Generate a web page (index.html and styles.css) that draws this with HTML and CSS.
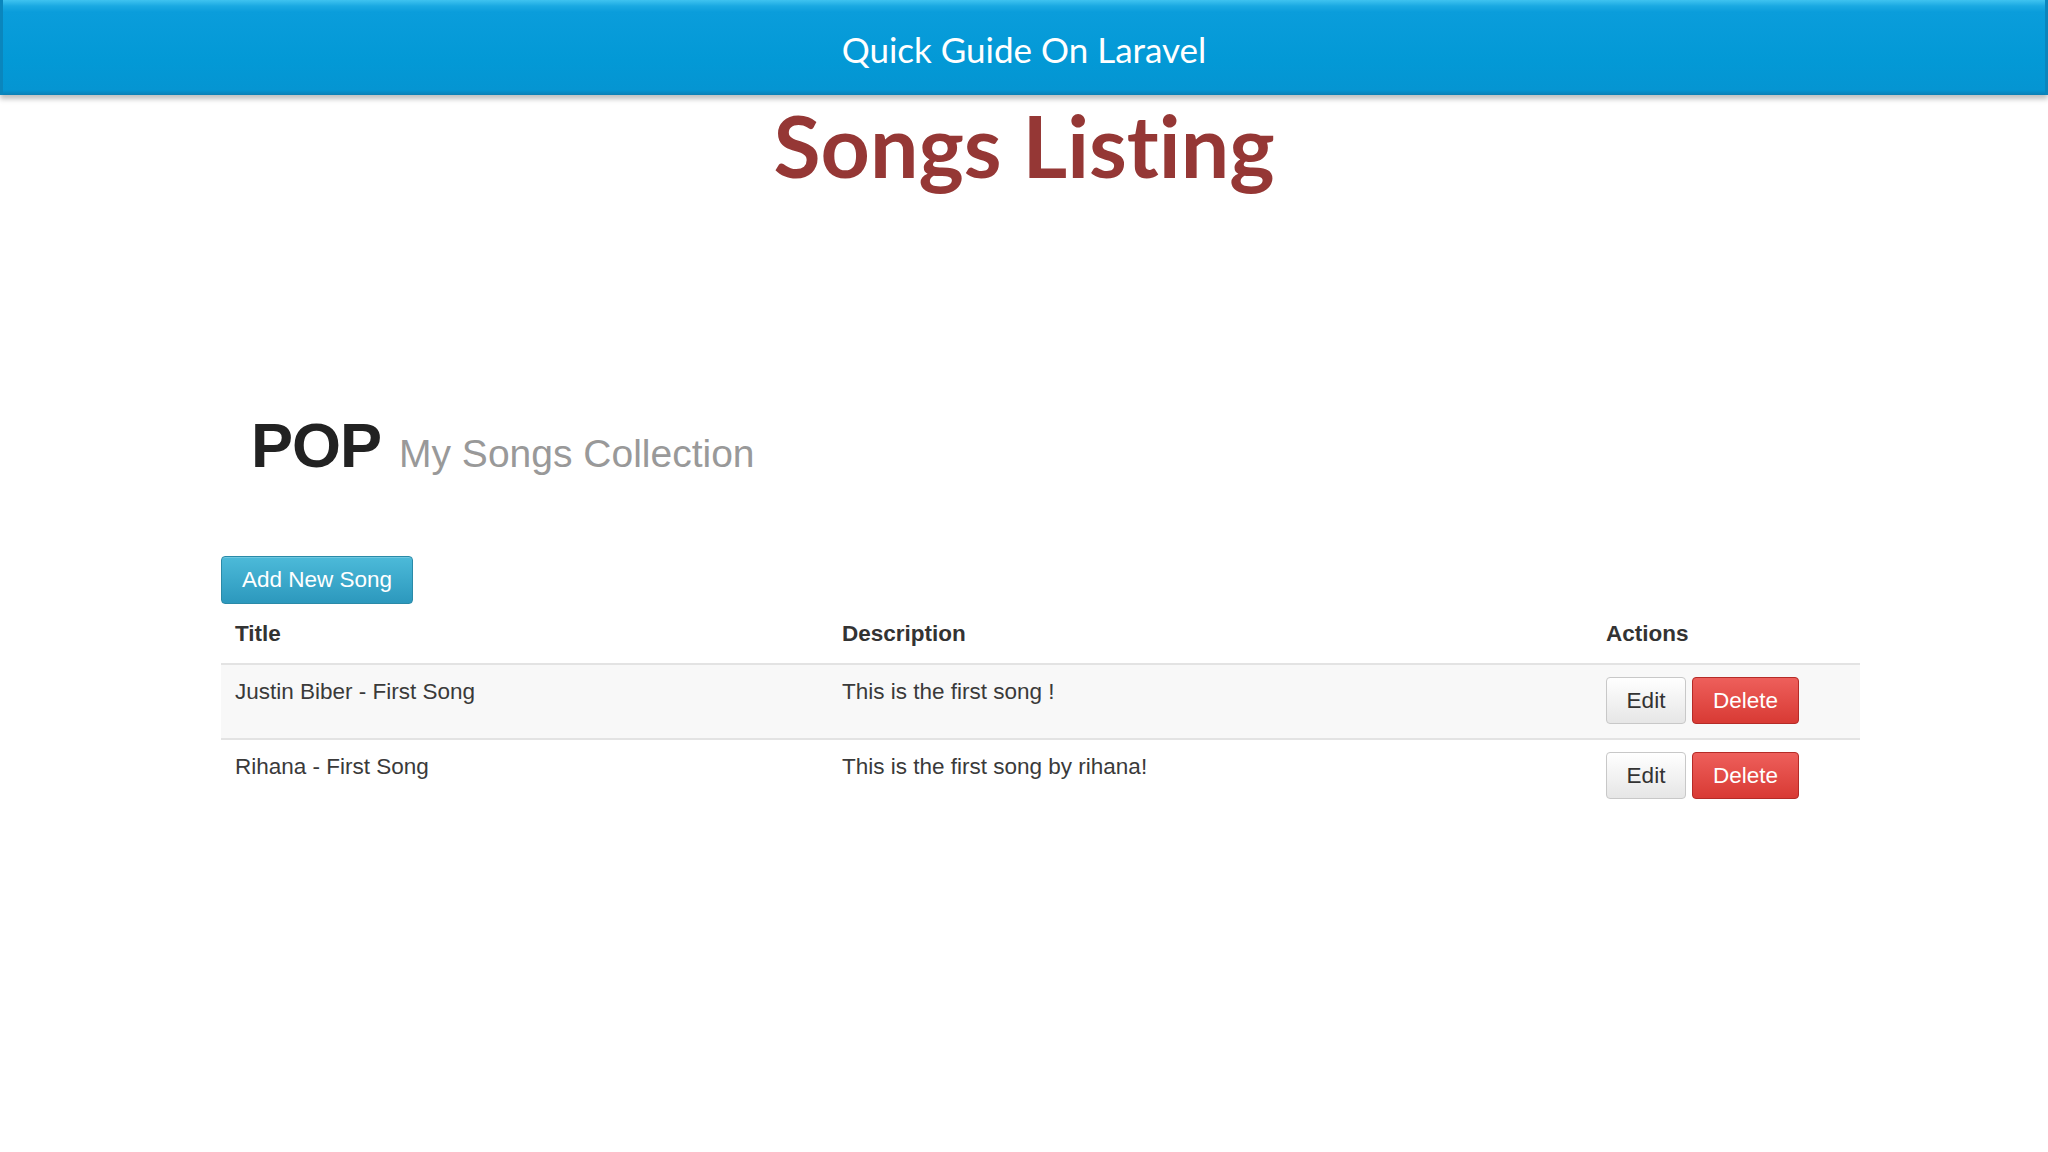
FILE: index.html
```html
<!DOCTYPE html>
<html>
<head>
<meta charset="utf-8">
<link rel="stylesheet" href="styles.css">
</head>
<body>
<header class="banner">
  <div class="banner-title">Quick Guide On Laravel</div>
</header>
<h1 class="slide-title">Songs Listing</h1>
<main class="app">
  <div class="page-header">
    <span class="brand">POP</span>
    <span class="subtitle">My Songs Collection</span>
  </div>
  <button class="btn btn-info">Add New Song</button>
  <table class="songs">
    <thead>
      <tr>
        <th class="col-title">Title</th>
        <th class="col-desc">Description</th>
        <th class="col-actions">Actions</th>
      </tr>
    </thead>
    <tbody>
      <tr class="striped">
        <td>Justin Biber - First Song</td>
        <td>This is the first song !</td>
        <td><div class="actions"><button class="btn btn-default">Edit</button><button class="btn btn-danger">Delete</button></div></td>
      </tr>
      <tr>
        <td>Rihana - First Song</td>
        <td>This is the first song by rihana!</td>
        <td><div class="actions"><button class="btn btn-default">Edit</button><button class="btn btn-danger">Delete</button></div></td>
      </tr>
    </tbody>
  </table>
</main>
</body>
</html>
```
FILE: styles.css
```css
html, body {
  margin: 0;
  padding: 0;
  background: #ffffff;
}
body {
  width: 2048px;
  height: 1152px;
  overflow: hidden;
  font-family: "Liberation Sans", Arial, sans-serif;
}
.banner {
  height: 95px;
  background: linear-gradient(to bottom, #3fc3f0 0px, #1aa9e2 6px, #0a9ddb 12px, #0399d6 60px, #0595d2 90px, #0b7fb5 95px);
  border-left: 3px solid #0a86bd;
  border-right: 3px solid #0a86bd;
  box-shadow: 0 4px 5px rgba(0,0,0,0.25);
  display: flex;
  align-items: center;
  justify-content: center;
  box-sizing: border-box;
}
.banner-title {
  font-family: Lato, "Open Sans", sans-serif;
  font-size: 35px;
  color: #ffffff;
  padding-top: 2px;
}
.slide-title {
  margin: 0;
  padding-top: 0;
  text-align: center;
  font-family: Lato, "Open Sans", sans-serif;
  font-weight: 700;
  font-size: 86px;
  line-height: 100px;
  color: #953735;
  font-variant-ligatures: none;
}
.app {
  margin-left: 221px;
  width: 1639px;
  padding-top: 214px;
}
.page-header {
  display: flex;
  align-items: baseline;
  padding-left: 30px;
  gap: 18px;
  height: 90px;
}
.brand {
  font-size: 63px;
  font-weight: 700;
  color: #222;
  letter-spacing: -1px;
}
.subtitle {
  font-size: 39px;
  color: #999;
}
.btn {
  font-family: "Liberation Sans", Arial, sans-serif;
  font-size: 22.5px;
  border-radius: 4px;
  cursor: pointer;
  padding: 0;
}
.btn-info {
  margin-top: 57px;
  width: 192px;
  height: 48px;
  color: #fff;
  border: 1px solid #2a8aa8;
  background: linear-gradient(to bottom, #4cbad9, #2c98bd);
  box-shadow: inset 0 1px 0 rgba(255,255,255,0.2);
}
.songs {
  width: 1639px;
  border-collapse: collapse;
  margin-top: 4px;
  font-size: 22.5px;
  color: #3a3a3a;
}
.songs th {
  text-align: left;
  font-weight: 700;
  padding: 11px 14px 14px;
  line-height: 30px;
  border-bottom: 2px solid #e3e3e3;
  color: #333;
}
.col-title { width: 579px; }
.col-desc { width: 736px; }
.songs td {
  vertical-align: top;
  padding: 12px 14px 14px;
  line-height: 30px;
  border-bottom: 2px solid #e3e3e3;
}
.songs tbody tr:last-child td {
  border-bottom: none;
}
.striped td {
  background: #f8f8f8;
}
.actions {
  display: flex;
  gap: 6px;
}
.btn-default {
  width: 80px;
  height: 47px;
  color: #333;
  border: 1px solid #c8c8c8;
  background: linear-gradient(to bottom, #ffffff, #e6e6e6);
}
.btn-danger {
  width: 107px;
  height: 47px;
  color: #fff;
  border: 1px solid #b52b27;
  background: linear-gradient(to bottom, #ee5f5b, #d83a34);
}
```
